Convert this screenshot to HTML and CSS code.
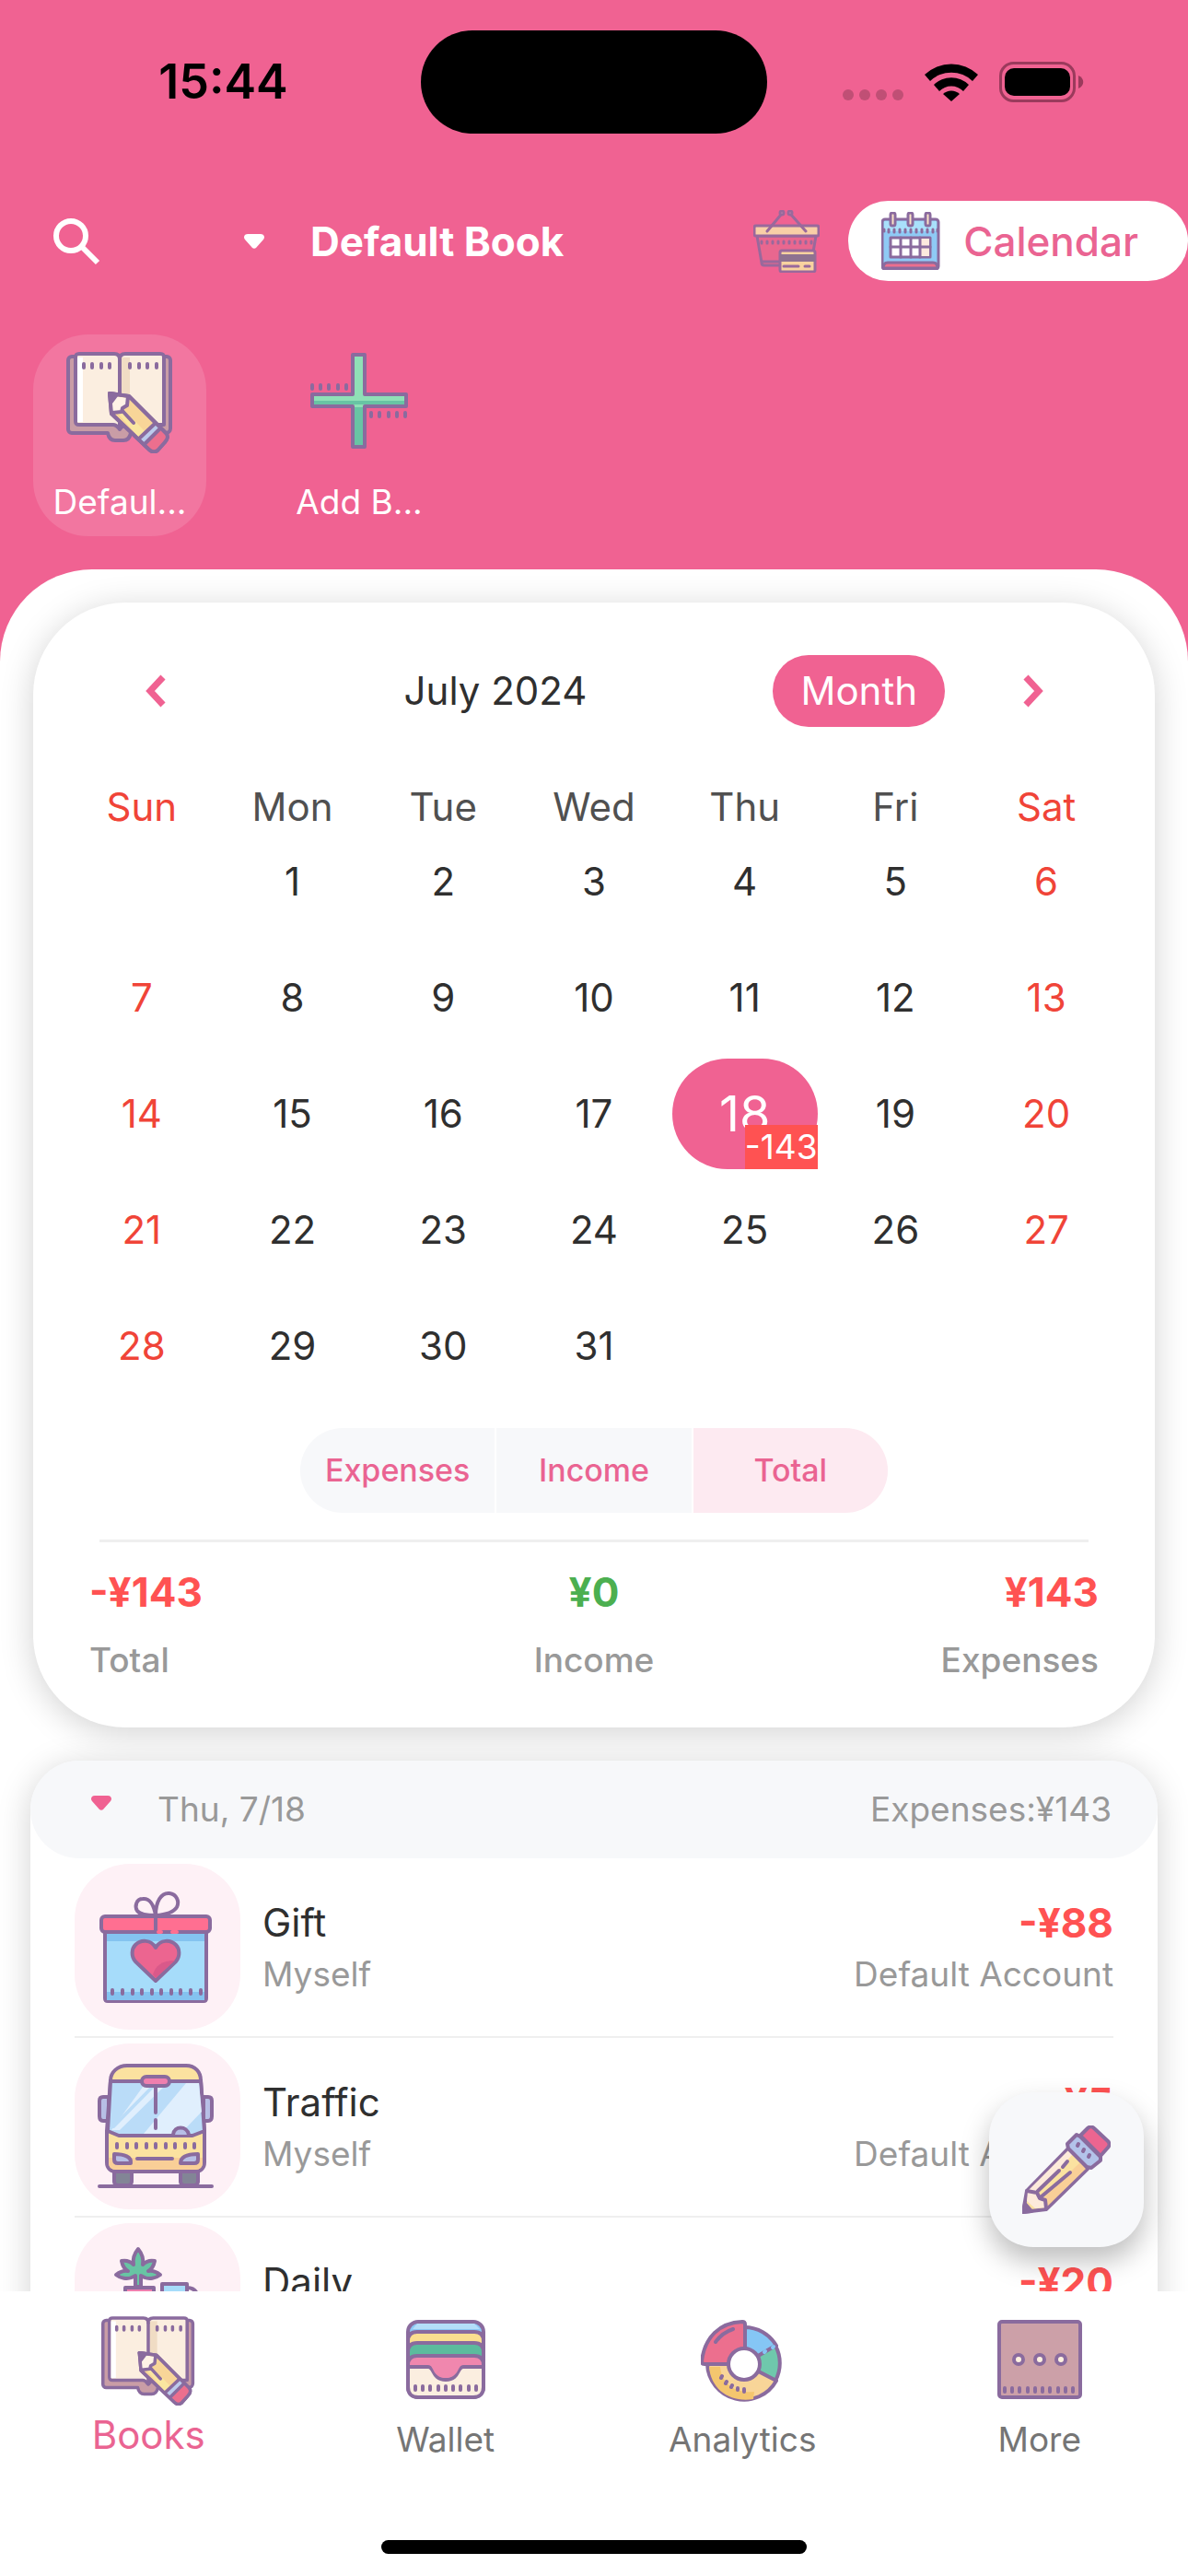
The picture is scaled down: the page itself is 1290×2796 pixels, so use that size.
FILE: index.html
```html
<!DOCTYPE html>
<html lang="en">

<head>
    <meta charset="utf-8">
    <meta name="viewport" content="width=device-width, initial-scale=1.0">
    <title>Default Book</title>
    <link rel="stylesheet" href="styles.css">
</head>

<body>

    <!-- the open book is used twice: in the book list and in the tab bar -->
    <svg class="sprite" aria-hidden="true">
        <symbol id="icon-book" viewBox="0 0 116 110">
            <path fill="#c99da6" d="M10 5H6a4 4 0 0 0-4 4v75a4 4 0 0 0 4 4h39c1 5 4 8 8 8h9c4 0 7-3 8-8h38a5 5 0 0 0 5-5V9a4 4 0 0 0-4-4z" />
            <path fill="#fbeee0" d="M14 2h38c4 0 6 2 6 6 0-4 2-6 6-6h38c3 0 4 1 4 4v73H65c-4 0-5 3-7 5-2-2-3-5-7-5H14c-3 0-4-1-4-4V6c0-3 1-4 4-4z" />
            <path class="fill-only" fill="#f0dcc4" d="M60 6h9v68h-9z" />
            <path class="fill-only" fill="#fff" d="M12 6h6v70h-6z" />
            <path fill="none" d="M58 8v74" />
            <path fill="none" d="M19 13v4M28 13v4M38 13v4M47 13v4M69 13v4M79 13v4M88 13v4M98 13v4" />
            <path fill="#f8d598" d="M47 45l21 3 40 40c3 3 2 7-1 10l-8 9c-3 2-6 2-9-1L49 67z" />
            <path class="fill-only" fill="#fff3e6" d="M50 48l17 2-1 9-6 5-10 1z" />
            <path class="fill-only" fill="#fae6a0" d="M56 67l8-3 22 23-7 6z" />
            <path class="fill-only" fill="#ec6f8e" d="M101 82l7 7c2 3 2 6-1 8l-9 9c-2 2-5 1-7-1l-7-7z" />
            <path class="fill-only" fill="#bccbec" d="M96 77l6 6-17 16-6-6z" />
            <path fill="none" d="M97 77L79 94M102 83L85 100M50 66l10-1 1-4 5-3 1-10M61 64l12 13M47 45l21 3 40 40c3 3 2 7-1 10l-8 9c-3 2-6 2-9-1L49 67z" />
            <path fill="#8a6b9e" d="M47 45l8 1-6 8z" />
        </symbol>
    </svg>

    <div class="app">

        <div class="status">
            <span class="time">15:44</span>
            <span class="island"></span>
            <div class="signals">
                <span class="dots"><i></i><i></i><i></i><i></i></span>
                <svg width="60" height="42" viewBox="0 0 60 42" aria-hidden="true">
                    <path d="M1 13a42 42 0 0 1 58 0l-6 7a33 33 0 0 0-46 0z" />
                    <path d="M11 24a27 27 0 0 1 38 0l-6 7a18 18 0 0 0-26 0z" />
                    <path d="M21 34a13 13 0 0 1 18 0l-9 8z" />
                </svg>
                <svg class="battery" width="92" height="44" viewBox="0 0 92 44" aria-hidden="true">
                    <rect x="1.5" y="1.5" width="80" height="41" rx="14" fill="none" stroke="#9b3a5c" stroke-width="3" />
                    <rect x="6" y="7" width="71" height="30" rx="10" />
                    <path fill="#9b3a5c" d="M86 15c7 3 7 11 0 14z" />
                </svg>
            </div>
        </div>

        <header class="topbar">
            <button class="search" aria-label="Search">
                <svg width="52" height="52" viewBox="0 0 52 52" fill="none" stroke="#fff" stroke-width="6">
                    <circle cx="20" cy="20" r="16" />
                    <path d="M31 31l18 18" />
                </svg>
            </button>
            <button class="book-select">
                <svg width="22" height="16" viewBox="0 0 22 16" fill="#fff">
                    <path d="M4 0h14c4 0 5 4 3 6l-8 9c-1 1-3 1-4 0L1 6C-1 4 0 0 4 0z" />
                </svg>
                <span>Default Book</span>
            </button>
            <button class="basket" aria-label="Shopping">
                <svg class="art" width="72" height="68" viewBox="0 0 72 68">
                    <path fill="#e8688f" d="M4 28l5 29c0 2 1 3 3 3h48c2 0 3-1 3-3l5-29z" />
                    <rect x="1" y="17" width="70" height="11" rx="2" fill="#fbe3ab" />
                    <path fill="none" d="M30 5L15 23M41 5l16 18M10 56h18M9 34v2M15 34v2M21 34v2M27 34v2M33 34v2M39 34v2M45 34v2M51 34v2M57 34v2M63 34v2" />
                    <circle cx="31" cy="3" r="2" fill="#eeb4c8" />
                    <circle cx="40" cy="3" r="2" fill="#eeb4c8" />
                    <rect x="29" y="44" width="38" height="23" rx="2" fill="#fbe6a2" />
                    <path class="fill-only" fill="#7e7590" d="M29 48h38v8H29z" />
                    <path fill="none" d="M33 61h16M56 61h5" />
                </svg>
            </button>
            <button class="calendar-pill">
                <svg class="art" width="64" height="63" viewBox="0 0 64 63">
                    <rect x="1" y="8" width="61" height="54" rx="3" fill="#8fcaf5" />
                    <path class="fill-only" fill="#a9e0fb" d="M3 10h57v11H3z" />
                    <path fill="#ec6f8e" d="M2 61c0-4 2-6 5-6h49c3 0 5 2 5 6z" />
                    <path fill="none" d="M3 19v2M8 19v3M14 19v3M20 19v3M26 19v3M32 19v3M38 19v3M44 19v3M50 19v3M56 19v3M61 19v2" />
                    <rect x="10" y="28" width="43" height="21" fill="#fff" />
                    <path class="fill-only" fill="#fde9de" d="M43 29h9v19h-9z" />
                    <path fill="none" d="M21 28v21M32 28v21M42 28v21M10 38h43" />
                    <rect x="10" y="1" width="5" height="14" rx="2" fill="#fbe3c6" />
                    <rect x="29" y="1" width="5" height="14" rx="2" fill="#fbe3c6" />
                    <rect x="48" y="1" width="5" height="14" rx="2" fill="#fbe3c6" />
                </svg>
                <span>Calendar</span>
            </button>
        </header>

        <div class="books">
            <button class="book valgt">
                <svg class="art" width="116" height="110"><use href="#icon-book" /></svg>
                <span>Defaul...</span>
            </button>
            <button class="book">
                <svg class="art" width="106" height="106" viewBox="0 0 106 106">
                    <path fill="#8fe0b6" d="M46 3h13v43h45v13H59v44H46V59H2V46h44z" />
                    <path class="fill-only" fill="#68c4a4" d="M48 60h9v41h-9zM4 53h98v4H4z" />
                    <path fill="none" d="M2 36v4M11 36v4M20 36v4M30 36v4M39 36v4M66 66v4M75 66v4M85 66v4M94 66v4M103 66v4" />
                </svg>
                <span>Add B...</span>
            </button>
        </div>

        <main class="sheet">

            <section class="card calendar">
                <div class="month-bar">
                    <button aria-label="Previous month">
                        <svg width="22" height="36" viewBox="0 0 22 36"><path d="M19 3L5 18l14 15" /></svg>
                    </button>
                    <h1>July 2024</h1>
                    <button class="range">Month</button>
                    <button aria-label="Next month">
                        <svg width="22" height="36" viewBox="0 0 22 36"><path d="M3 3l14 15L3 33" /></svg>
                    </button>
                </div>

                <table class="days">
                    <thead>
                        <tr>
                            <th>Sun</th>
                            <th>Mon</th>
                            <th>Tue</th>
                            <th>Wed</th>
                            <th>Thu</th>
                            <th>Fri</th>
                            <th>Sat</th>
                        </tr>
                    </thead>
                    <tbody>
                        <tr>
                            <td></td>
                            <td><button>1</button></td>
                            <td><button>2</button></td>
                            <td><button>3</button></td>
                            <td><button>4</button></td>
                            <td><button>5</button></td>
                            <td><button>6</button></td>
                        </tr>
                        <tr>
                            <td><button>7</button></td>
                            <td><button>8</button></td>
                            <td><button>9</button></td>
                            <td><button>10</button></td>
                            <td><button>11</button></td>
                            <td><button>12</button></td>
                            <td><button>13</button></td>
                        </tr>
                        <tr>
                            <td><button>14</button></td>
                            <td><button>15</button></td>
                            <td><button>16</button></td>
                            <td><button>17</button></td>
                            <td><button class="today">18<span class="badge">-143</span></button></td>
                            <td><button>19</button></td>
                            <td><button>20</button></td>
                        </tr>
                        <tr>
                            <td><button>21</button></td>
                            <td><button>22</button></td>
                            <td><button>23</button></td>
                            <td><button>24</button></td>
                            <td><button>25</button></td>
                            <td><button>26</button></td>
                            <td><button>27</button></td>
                        </tr>
                        <tr>
                            <td><button>28</button></td>
                            <td><button>29</button></td>
                            <td><button>30</button></td>
                            <td><button>31</button></td>
                            <td></td>
                            <td></td>
                            <td></td>
                        </tr>
                    </tbody>
                </table>

                <div class="segments">
                    <button>Expenses</button>
                    <button>Income</button>
                    <button class="valgt">Total</button>
                </div>

                <hr>

                <div class="totals">
                    <div>
                        <strong>-¥143</strong>
                        <span>Total</span>
                    </div>
                    <div>
                        <strong class="plus">¥0</strong>
                        <span>Income</span>
                    </div>
                    <div>
                        <strong>¥143</strong>
                        <span>Expenses</span>
                    </div>
                </div>
            </section>

            <section class="card list">
                <button class="list-head">
                    <svg width="22" height="16" viewBox="0 0 22 16" fill="#f06292">
                        <path d="M4 0h14c4 0 5 4 3 6l-8 9c-1 1-3 1-4 0L1 6C-1 4 0 0 4 0z" />
                    </svg>
                    <span>Thu, 7/18</span>
                    <span class="sum">Expenses:¥143</span>
                </button>

                <article class="entry">
                    <div class="tile">
                        <svg class="art" width="122" height="122" viewBox="0 0 122 122">
                            <path fill="#a6dcfa" d="M6 44h110v73c0 2-1 3-3 3H9c-2 0-3-1-3-3z" />
                            <path class="fill-only" fill="#84c3f0" d="M8 46h106v9H8zM8 110h106v9H8z" />
                            <rect x="2" y="28" width="118" height="17" rx="4" fill="#ff6f91" />
                            <path fill="none" d="M61 27c-2-12-7-19-14-18-7 0-9 8-6 13 3 4 9 5 20 5zM61 27c0-15 6-25 15-24 8 1 11 9 8 15-3 5-9 8-23 9zM61 27v18" />
                            <path class="gap" d="M64 45h3M79 45h5" />
                            <path fill="#ec6590" d="M61 98L39 77c-5-6-4-14 0-18 6-6 17-6 22 3 5-9 16-9 22-3 4 4 5 12 0 18z" />
                            <path class="fill-only" fill="#d9598a" d="M58 91c3-9 9-15 24-15L61 95z" />
                            <path fill="none" d="M14 108v4M25 108v4M36 108v4M46 108v4M57 108v4M67 108v4M78 108v4M88 108v4M99 108v4M110 108v4" />
                        </svg>
                    </div>
                    <div class="what">
                        <h2>Gift</h2>
                        <p>Myself</p>
                    </div>
                    <div class="price">
                        <strong>-¥88</strong>
                        <p>Default Account</p>
                    </div>
                </article>

                <article class="entry">
                    <div class="tile">
                        <svg class="art" width="126" height="136" viewBox="0 0 126 136">
                            <rect x="18" y="112" width="19" height="20" rx="4" fill="#828596" />
                            <rect x="90" y="112" width="19" height="20" rx="4" fill="#828596" />
                            <path fill="#b7bfe6" d="M12 36H6c-3 0-4 2-4 4v17c0 3 1 5 4 5h6zM115 36h5c3 0 4 2 4 4v17c0 3-1 5-4 5h-5z" />
                            <path fill="#fbe2a0" d="M32 2h64c10 0 16 7 16 16l4 55v34c0 6-4 10-10 10H20c-6 0-10-4-10-10V73l4-55C14 9 22 2 32 2z" />
                            <path class="fill-only" fill="#f9cf97" d="M12 102h102v5c0 5-3 8-8 8H20c-5 0-8-3-8-8z" />
                            <path fill="#badcf8" d="M14 19h98l4 54-13 5H23l-12-5z" />
                            <path class="fill-only" fill="#e0effd" d="M52 21h24L24 72h-9zM96 21h14l3 31-23 24H50z" />
                            <path class="fill-only" fill="#badcf8" d="M61 21h5L18 70h-5z" />
                            <rect x="48" y="14" width="30" height="10" rx="5" fill="#ef7fae" />
                            <path fill="none" d="M63 25v28M63 61v9M43 103h38M2 133h122M21 87v4M32 87v4M42 87v4M53 87v4M63 87v4M74 87v4M84 87v4M95 87v4M105 87v4" />
                            <path fill="#b7bfe6" d="M82 77c1-10 15-10 17 0M18 98c11 0 19 3 18 10H22c-3 0-4-2-4-4zM109 98c-11 0-19 3-19 10h15c3 0 4-2 4-4z" />
                        </svg>
                    </div>
                    <div class="what">
                        <h2>Traffic</h2>
                        <p>Myself</p>
                    </div>
                    <div class="price">
                        <strong>-¥5</strong>
                        <p>Default Account</p>
                    </div>
                </article>

                <article class="entry">
                    <div class="tile">
                        <svg class="art" width="126" height="136" viewBox="27 22 126 136">
                            <path fill="#68c4a4" d="M71 28c5 6 6 11 5 17 4-4 8-5 13-4-1 5-3 9-7 11 5-1 9 1 13 4-5 4-12 5-17 3l-4-2v12h-6V57l-4 2c-5 2-12 1-17-3 4-3 8-5 13-4-4-2-6-6-7-11 5-1 9 0 13 4-1-6 0-11 5-17z" />
                            <path fill="#ef7fae" d="M57 70h31v14h-3l-3 50H63l-3-50h-3z" />
                            <path fill="none" d="M124 70c8 0 12 5 12 14s-4 14-12 14" />
                            <path fill="#a6dcfa" d="M97 66h27v60H97z" />
                        </svg>
                    </div>
                    <div class="what">
                        <h2>Daily</h2>
                        <p>Myself</p>
                    </div>
                    <div class="price">
                        <strong>-¥20</strong>
                        <p>Default Account</p>
                    </div>
                </article>
            </section>

            <button class="add" aria-label="Add entry">
                <svg class="art" width="96" height="96" viewBox="0 0 96 96">
                    <path fill="#fbe2a0" d="M5 71l46-47 20 23-45 44-25 3z" />
                    <path class="fill-only" fill="#f9cf97" d="M27 88l42-41-6-7-40 39z" />
                    <path class="fill-only" fill="#fdeadb" d="M6 71l45-45 4 5-38 41 3 7 5 2 1 8-12 1L5 82z" />
                    <path fill="#ec6590" d="M63 11l8-8c2-2 5-2 7 0l15 14c2 2 2 5 0 7l-8 9z" />
                    <path fill="#b3c3ea" d="M49 20l10-10 4 2 22 22v4L75 46l-5-1-20-20z" />
                    <path fill="none" d="M61 20l-1 2M67 26l-1 2M73 32l-1 2M5 71l11 2 3 6 6 2 1 9M17 71l23-22M44 45l5-6M21 77l31-26" />
                    <path fill="#8a6b9e" d="M3 85l7 8-9 1z" />
                </svg>
            </button>

        </main>

        <nav class="tabs">
            <a class="valgt" href="#">
                <svg class="art" width="102" height="97"><use href="#icon-book" /></svg>
                <span>Books</span>
            </a>
            <a href="#">
                <svg class="art" width="86" height="86" viewBox="0 0 86 86">
                    <rect x="2" y="2" width="82" height="82" rx="11" fill="#8dc9f6" />
                    <path class="fill-only" fill="#b4def9" d="M12 4h62l6 6H7z" />
                    <path fill="#fbdf90" d="M2 23c0-7 4-10 10-10h62c6 0 10 3 10 10v14H2z" />
                    <path fill="#5cbb9d" d="M2 35c0-7 4-10 10-10h62c6 0 10 3 10 10v14H2z" />
                    <path fill="#f087ae" d="M2 49c0-7 4-10 10-10h62c6 0 10 3 10 10v18H2z" />
                    <path fill="#fbeee0" d="M2 51h22c7 0 4 14 19 14s12-14 19-14h22v22c0 7-4 11-11 11H13C6 84 2 80 2 73z" />
                    <path class="fill-only" fill="#f087ae" d="M26 49h34c-4 3-4 14-17 14S30 52 26 49z" />
                    <path fill="none" d="M10 72v4M18 72v4M26 72v4M35 72v4M43 72v4M51 72v4M59 72v4M68 72v4M76 72v4" />
                </svg>
                <span>Wallet</span>
            </a>
            <a href="#">
                <svg class="art" width="90" height="90" viewBox="0 0 90 90">
                    <path fill="#85c6f5" d="M47 8a40 40 0 0 1 35 20L47 48z" />
                    <path fill="#6fc8ac" d="M81 28a40 40 0 0 1 0 38L47 48z" />
                    <path fill="#f8d598" d="M82 66a40 40 0 0 1-75-18h40z" />
                    <path class="fill-only" fill="#f4c66e" d="M9 51h12c2 20 18 29 37 27l-1 8C32 90 11 76 9 51z" />
                    <path class="joint" fill="none" d="M70 34l-1 1M79 29l-1 1" />
                    <path fill="#ec6f8e" d="M45 2c2 0 3 1 3 3v43H4c-2 0-3-1-3-3C4 19 20 3 45 2z" />
                    <path fill="none" d="M16 24c5-7 10-11 19-14M23 61l-1 2M28 67l-1 2M34 71l-1 2M40 74v2M47 75v3" />
                    <circle cx="47" cy="48" r="17" fill="#fff" />
                </svg>
                <span>Analytics</span>
            </a>
            <a href="#">
                <svg class="art" width="92" height="86" viewBox="0 0 92 86">
                    <rect x="2" y="2" width="88" height="82" rx="3" fill="#cca0a8" />
                    <path fill="none" d="M8 74v4M16 74v4M24 74v4M33 74v4M41 74v4M49 74v4M57 74v4M66 74v4M74 74v4M82 74v4" />
                    <circle cx="23" cy="43" r="5" fill="#fff3e0" />
                    <circle cx="46" cy="43" r="5" fill="#fff3e0" />
                    <circle cx="69" cy="43" r="5" fill="#fff3e0" />
                </svg>
                <span>More</span>
            </a>
        </nav>
        <div class="home"><span></span></div>

    </div>

</body>

</html>
```
FILE: styles.css
```css
* {
    box-sizing: border-box;
}

body {
    margin: 0;
    font-family: Inter, Roboto, sans-serif;
    font-size: 37px;
    line-height: 48px;
    color: #2f2f2f;
}

h1,
h2,
p {
    margin: 0;
    font-weight: 400;
}

button {
    margin: 0;
    padding: 0;
    border: none;
    background: none;
    font: inherit;
    color: inherit;
}

svg {
    display: block;
    flex: none;
}

.sprite {
    position: absolute;
    width: 0;
    height: 0;
}

/* all the coloured icons share the same purple outline */
.art,
.sprite {
    stroke: #8a6b9e;
    stroke-width: 4;
    stroke-linecap: round;
    stroke-linejoin: round;
}

.art .fill-only,
.sprite .fill-only {
    stroke: none;
}

.art .gap {
    stroke: #ff6f91;
}

.art .joint {
    stroke: #85c6f5;
}

.topbar .art {
    stroke-width: 3;
}

.app {
    display: flex;
    flex-direction: column;
    height: 100vh;
    background-color: #f06292;
}


/* status bar */

.status {
    display: grid;
    grid-template-columns: 1fr 376px 1fr;
    align-items: center;
    height: 177px;
    color: #000;
}

.time {
    padding-left: 28px;
    font-size: 52px;
    font-weight: 600;
    text-align: center;
}

.island {
    height: 112px;
    border-radius: 56px;
    background-color: #000;
}

.signals {
    display: flex;
    align-items: center;
    gap: 22px;
    padding-left: 82px;
}

.dots {
    display: flex;
    gap: 6px;
    padding-top: 28px;
}

.dots i {
    width: 12px;
    height: 12px;
    border-radius: 50%;
    background-color: #c04f75;
}


/* search, title, calendar switch */

.topbar {
    display: flex;
    align-items: center;
    height: 87px;
    margin-top: 41px;
    padding-left: 57px;
    color: #fff;
}

.book-select {
    display: flex;
    align-items: center;
    gap: 50px;
    margin-left: 156px;
    font-size: 44px;
    font-weight: 700;
}

.basket {
    margin-left: auto;
    opacity: 0.85;
}

.calendar-pill {
    display: flex;
    align-items: center;
    gap: 25px;
    height: 87px;
    margin-left: 31px;
    padding: 0 54px 0 36px;
    border-radius: 44px;
    background-color: #fff;
    color: #ea6492;
    font-size: 44px;
    font-weight: 500;
}


/* books */

.books {
    display: flex;
    gap: 72px;
    padding: 58px 36px 36px;
}

.book {
    display: flex;
    flex-direction: column;
    align-items: center;
    justify-content: space-between;
    width: 188px;
    height: 219px;
    padding: 19px 0 13px;
    border-radius: 60px;
    color: #fff;
}

.book.valgt {
    background-color: rgba(255, 255, 255, 0.13);
}


/* white sheet */

.sheet {
    position: relative;
    display: flex;
    flex-direction: column;
    flex: 1;
    gap: 36px;
    min-height: 0;
    padding: 36px;
    overflow: hidden;
    border-radius: 100px 100px 0 0;
    background-color: #fff;
}

.card {
    flex: none;
    background-color: #fff;
    box-shadow: 0 6px 36px rgba(0, 0, 0, 0.18);
}

.calendar {
    padding: 57px 36px 49px;
    border-radius: 100px;
}

.month-bar {
    display: grid;
    grid-template-columns: 194px 1fr 216px 192px;
    align-items: center;
    height: 78px;
}

.month-bar h1 {
    font-size: 42px;
    text-align: center;
}

.month-bar svg {
    margin: 0 auto;
    fill: none;
    stroke: #f06292;
    stroke-width: 7;
}

.range {
    justify-self: end;
    height: 78px;
    padding: 0 30px;
    border-radius: 39px;
    background-color: #f06292;
    color: #fff;
    font-size: 42px;
}

.days {
    width: 100%;
    margin-top: 69px;
    border-collapse: collapse;
    table-layout: fixed;
    font-size: 42px;
}

.days th {
    padding: 0;
    color: #505050;
    font-weight: 400;
    line-height: 36px;
}

.days td {
    height: 126px;
    padding: 3px;
}

.days button {
    position: relative;
    display: block;
    width: 100%;
    height: 120px;
}

.days th:first-child,
.days th:last-child,
.days td:first-child,
.days td:last-child {
    color: #f04438;
}

.days .today {
    border-radius: 60px;
    background-color: #f06292;
    color: #fff;
    font-size: 54px;
}

.badge {
    position: absolute;
    right: 0;
    bottom: 0;
    background-color: #ff5252;
    font-size: 37px;
    line-height: 48px;
}

.segments {
    display: grid;
    grid-template-columns: repeat(3, 1fr);
    gap: 2px;
    width: 638px;
    height: 92px;
    margin: 26px auto 29px;
    overflow: hidden;
    border-radius: 46px;
    color: #ea6492;
    font-size: 34px;
    font-weight: 500;
}

.segments button {
    background-color: #f7f8fa;
}

.segments .valgt {
    background-color: #fdeaf1;
}

hr {
    height: 3px;
    margin: 0 36px;
    border: none;
    background-color: #efefef;
}

.totals {
    display: grid;
    grid-template-columns: repeat(3, 1fr);
    padding: 30px 25px 0;
}

.totals div {
    display: flex;
    flex-direction: column;
    gap: 26px;
    color: #999;
    font-weight: 500;
}

.totals div:nth-child(2) {
    text-align: center;
}

.totals div:last-child {
    text-align: right;
}

strong {
    color: #ff5252;
    font-size: 44px;
    font-weight: 700;
}

.totals .plus {
    color: #4caf50;
}


/* entries of the day */

.list {
    margin: 0 -3px;
    border-radius: 54px 54px 0 0;
}

.list-head {
    display: flex;
    align-items: center;
    width: 100%;
    height: 106px;
    padding: 0 50px 0 66px;
    border-radius: 54px;
    background-color: #f7f8fa;
    color: #999;
}

.list-head svg {
    margin: 0 50px 14px 0;
}

.list-head .sum {
    margin-left: auto;
}

.entry {
    display: flex;
    gap: 24px;
    height: 195px;
    margin: 0 48px;
    padding-top: 6px;
    border-bottom: 2px solid #efefef;
}

.tile {
    display: flex;
    align-items: center;
    justify-content: center;
    width: 180px;
    height: 180px;
    padding-right: 4px;
    border-radius: 60px;
    background-color: #fef1f6;
}

.what,
.price {
    display: flex;
    flex-direction: column;
    gap: 8px;
    padding-top: 40px;
}

.price {
    margin-left: auto;
    text-align: right;
}

.entry h2 {
    font-size: 42px;
}

.entry p {
    color: #999;
}

.add {
    position: absolute;
    right: 48px;
    bottom: 48px;
    padding: 36px;
    border-radius: 48px;
    background-color: #f7f8fa;
    box-shadow: 0 15px 30px rgba(0, 0, 0, 0.26);
}


/* tab bar */

.tabs {
    display: grid;
    grid-template-columns: repeat(4, 1fr);
    height: 270px;
    background-color: #fff;
}

.tabs a {
    display: flex;
    flex-direction: column;
    align-items: center;
    justify-content: space-between;
    height: 185px;
    padding-top: 31px;
    color: #757575;
    text-decoration: none;
}

.tabs .valgt {
    height: 180px;
    padding-top: 27px;
    color: #ea6492;
    font-size: 42px;
}

.home {
    height: 39px;
    background-color: #fff;
}

.home span {
    display: block;
    width: 462px;
    height: 15px;
    margin: 0 auto;
    border-radius: 8px;
    background-color: #000;
}
```
